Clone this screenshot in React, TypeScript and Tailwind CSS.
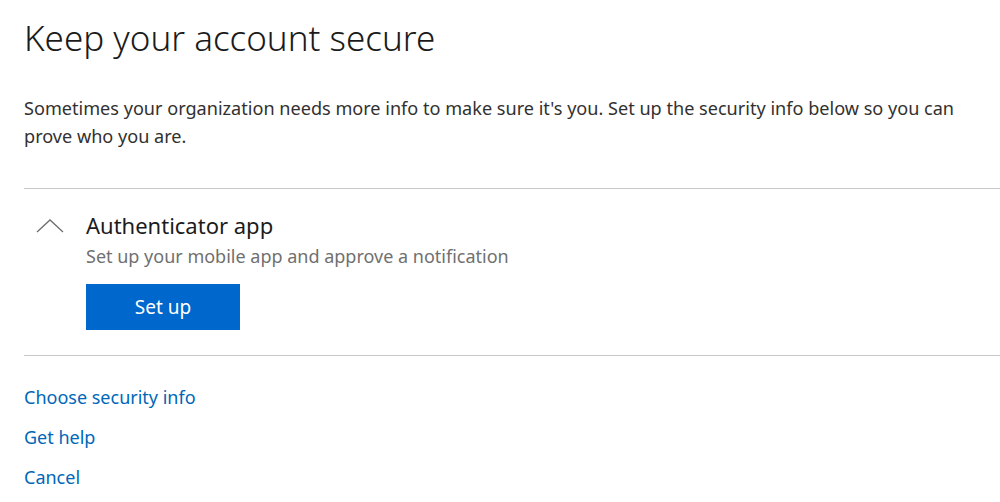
import React from 'react';

const App: React.FC = () => {
  return (
    <div className="w-[1000px] h-[502px] bg-white overflow-hidden font-['Noto_Sans',sans-serif] text-[#323130]">
      <div className="pl-6">
        <h1 className="pt-[14px] text-[35px] leading-[48px] font-light text-[#1b1b1b]">
          Keep your account secure
        </h1>
        <p className="mt-[32px] text-[18.1px] leading-[28px] text-[#323130] pr-10">
          Sometimes your organization needs more info to make sure it's you. Set up the security info below so you can prove who you are.
        </p>

        <div className="mt-[38px] border-t border-[#c8c8c8]">
          <div className="flex pt-[22px] pb-[25px]">
            <div className="w-[62px] pt-[7px] pl-[12px]">
              <svg width="28" height="16" viewBox="0 0 28 16" fill="none">
                <path d="M1 14 L14 2 L27 14" stroke="#6e6e6e" strokeWidth="1.3" />
              </svg>
            </div>
            <div className="flex flex-col">
              <div className="text-[22px] leading-[28px] text-[#1b1b1b]">Authenticator app</div>
              <div className="mt-[4px] text-[18px] leading-[26px] text-[#707070]">
                Set up your mobile app and approve a notification
              </div>
              <button className="mt-[15px] w-[154px] h-[46px] bg-[#0067cd] text-white text-[19px]">
                Set up
              </button>
            </div>
          </div>
        </div>

        <div className="border-t border-[#c8c8c8] pt-[27px] flex flex-col gap-[12px] text-[18px] leading-[28px] text-[#0067b8]">
          <a href="#">Choose security info</a>
          <a href="#">Get help</a>
          <a href="#">Cancel</a>
        </div>
      </div>
    </div>
  );
};

export default App;
